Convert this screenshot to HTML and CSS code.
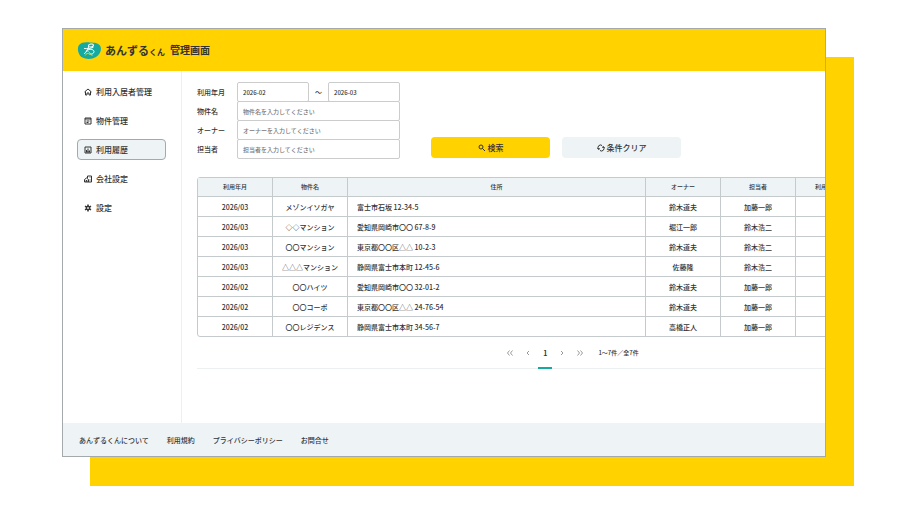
FILE: index.html
```html
<!DOCTYPE html>
<html lang="ja">
<head>
    <meta charset="UTF-8">
    <meta name="viewport" content="width=device-width, initial-scale=1.0">
    <title>あんずるくん 管理画面</title>
    <link rel="stylesheet" href="styles.css">
</head>
<body>
    <div class="window">
        <header class="header">
            <svg class="logo" viewBox="0 0 48 38" aria-hidden="true">
                <path fill="#16a9a0" d="M3 8C8 2 17 2 25 3c9 0 18 1 21 8 3 8-2 16-9 21-8 5-20 5-27 1C2 29-2 15 3 8z"/>
                <ellipse cx="27" cy="9" rx="5" ry="3" fill="none" stroke="#fff" stroke-width="2" transform="rotate(-12 27 9)"/>
                <path fill="none" stroke="#fff" stroke-width="2" stroke-linecap="round" d="M14 15c5 1 11 0 17-2M22 11c0 6-3 11-8 14M17 20c4-4 15-5 16 1 0 4-4 6-8 5"/>
                <path fill="none" stroke="#ffd200" stroke-width="2" stroke-linecap="round" d="M20 20c3 1 6 5 9 9M16 28c2-4 7-4 9-1"/>
            </svg>
            <h1 class="title"><span class="brand">あんずる<small>くん</small></span><span>管理画面</span></h1>
        </header>

        <div class="body">
            <nav class="sidebar">
                <a class="nav-item" href="#">
                    <svg class="icon" viewBox="0 0 16 16"><path d="M1 8l7-6 7 6M3 7v7h3v-4h4v4h3V7"/></svg>
                    利用入居者管理
                </a>
                <a class="nav-item" href="#">
                    <svg class="icon" viewBox="0 0 16 16"><path d="M2 2h12v12H2zM2 4h12M5 8h6M5 11h4"/></svg>
                    物件管理
                </a>
                <a class="nav-item active" href="#" aria-current="page">
                    <svg class="icon" viewBox="0 0 16 16"><path d="M2 2h12v12H2zM5 12V8M8 12V5M11 12V9M4 12h8"/></svg>
                    利用履歴
                </a>
                <a class="nav-item" href="#">
                    <svg class="icon" viewBox="0 0 16 16"><path d="M7 6V2h8v12H1V9l4-3 4 3v5M4 14v-3h2v3M12 5v1M12 8v1M12 11v1"/></svg>
                    会社設定
                </a>
                <a class="nav-item" href="#">
                    <svg class="icon gear" viewBox="0 0 16 16"><path d="M8 1v14M2 4l12 8M14 4L2 12"/><circle cx="8" cy="8" r="4"/><circle class="hole" cx="8" cy="8" r="1"/></svg>
                    設定
                </a>
            </nav>

            <main class="main">
                <form class="search">
                    <div class="fields">
                        <label for="from">利用年月</label>
                        <div class="range">
                            <input id="from" type="text" value="2026-02">
                            <span>〜</span>
                            <input id="to" type="text" value="2026-03" aria-label="利用年月（終了）">
                        </div>
                        <label for="property">物件名</label>
                        <input id="property" type="text" placeholder="物件名を入力してください">
                        <label for="owner">オーナー</label>
                        <input id="owner" type="text" placeholder="オーナーを入力してください">
                        <label for="staff">担当者</label>
                        <input id="staff" type="text" placeholder="担当者を入力してください">
                    </div>
                    <button class="btn btn-primary" type="button">
                        <svg class="icon" viewBox="0 0 16 16"><circle cx="6" cy="6" r="4"/><path d="M9 9l5 5"/></svg>
                        検索
                    </button>
                    <button class="btn" type="reset">
                        <svg class="icon" viewBox="0 0 16 16"><path d="M3 10a5 5 0 0 1 7-7M13 6a5 5 0 0 1-7 7M1 8l2 3 3-2M10 7l3-2 2 3"/></svg>
                        条件クリア
                    </button>
                </form>

                <table class="history">
                    <colgroup>
                        <col class="col"><col class="col"><col><col class="col"><col class="col"><col class="col">
                    </colgroup>
                    <thead>
                        <tr><th>利用年月</th><th>物件名</th><th>住所</th><th>オーナー</th><th>担当者</th><th>利用開始日時</th></tr>
                    </thead>
                    <tbody>
                        <tr><td>2026/03</td><td>メゾンイソガヤ</td><td class="address">富士市石坂 12-34-5</td><td>鈴木道夫</td><td>加藤一郎</td><td></td></tr>
                        <tr><td>2026/03</td><td>◇◇マンション</td><td class="address">愛知県岡崎市〇〇 67-8-9</td><td>堀江一郎</td><td>鈴木浩二</td><td></td></tr>
                        <tr><td>2026/03</td><td>〇〇マンション</td><td class="address">東京都〇〇区△△ 10-2-3</td><td>鈴木道夫</td><td>鈴木浩二</td><td></td></tr>
                        <tr><td>2026/03</td><td>△△△マンション</td><td class="address">静岡県富士市本町 12-45-6</td><td>佐藤隆</td><td>鈴木浩二</td><td></td></tr>
                        <tr><td>2026/02</td><td>〇〇ハイツ</td><td class="address">愛知県岡崎市〇〇 32-01-2</td><td>鈴木道夫</td><td>加藤一郎</td><td></td></tr>
                        <tr><td>2026/02</td><td>〇〇コーポ</td><td class="address">東京都〇〇区△△ 24-76-54</td><td>鈴木道夫</td><td>加藤一郎</td><td></td></tr>
                        <tr><td>2026/02</td><td>〇〇レジデンス</td><td class="address">静岡県富士市本町 34-56-7</td><td>高橋正人</td><td>加藤一郎</td><td></td></tr>
                    </tbody>
                </table>

                <div class="pagination">
                    <a href="#" aria-label="最初"><svg class="icon" viewBox="0 0 16 16"><path d="M7 3L3 8l4 5M13 3L9 8l4 5"/></svg></a>
                    <a href="#" aria-label="前へ"><svg class="icon" viewBox="0 0 16 16"><path d="M10 4L6 8l4 4"/></svg></a>
                    <a class="current" href="#">1</a>
                    <a href="#" aria-label="次へ"><svg class="icon" viewBox="0 0 16 16"><path d="M6 4l4 4-4 4"/></svg></a>
                    <a href="#" aria-label="最後"><svg class="icon" viewBox="0 0 16 16"><path d="M3 3l4 5-4 5M9 3l4 5-4 5"/></svg></a>
                    <span>1〜7件／全7件</span>
                </div>
            </main>
        </div>

        <footer class="footer">
            <a href="#">あんずるくんについて</a>
            <a href="#">利用規約</a>
            <a href="#">プライバシーポリシー</a>
            <a href="#">お問合せ</a>
        </footer>
    </div>
</body>
</html>
```
FILE: styles.css
```css
* {
    box-sizing: border-box;
}

body {
    margin: 0;
    min-height: 100vh;
    padding: 28px 90px 58px 62px;
    display: flex;
    background: #fff;
    color: #333;
    font-family: "Noto Sans CJK JP", sans-serif;
    font-size: 7px;
    font-weight: 500;
    line-height: 10px;
}

a {
    color: inherit;
    text-decoration: none;
}

.window {
    flex: 1;
    min-width: 0;
    display: flex;
    flex-direction: column;
    border: 1px solid #a4a9ab;
    background: #fff;
    box-shadow: 28px 29px 0 #ffd200;
}

/* Header */
.header {
    display: flex;
    align-items: center;
    gap: 3px;
    padding: 12px 14px 11px;
    background: #ffd200;
}

.logo {
    width: 25px;
    height: 19px;
}

.title {
    display: flex;
    gap: 5px;
    margin: 0;
    font-size: 10px;
    line-height: 16px;
    font-weight: 700;
}

.brand {
    font-size: 11px;
}

.brand small {
    font-size: 8px;
}

.icon {
    width: 8px;
    height: 8px;
    flex: none;
    fill: none;
    stroke: #333;
    stroke-width: 2;
}

.gear circle {
    fill: #333;
}

.gear path {
    stroke-width: 3;
}

.gear .hole {
    fill: #fff;
    stroke: #fff;
}

/* Sidebar */
.body {
    flex: 1;
    display: flex;
    min-height: 0;
}

.sidebar {
    width: 119px;
    flex: none;
    display: flex;
    flex-direction: column;
    gap: 8px;
    padding: 10px 15px 10px 14px;
    border-right: 1px solid #edf0f1;
}

.nav-item {
    display: flex;
    align-items: center;
    gap: 4px;
    padding: 4px 6px;
    border: 1px solid transparent;
    border-radius: 4px;
    font-size: 8px;
    line-height: 11px;
}

.nav-item.active {
    background: #eef3f6;
    border-color: #a4a9ab;
}

/* Search form */
.main {
    flex: 1;
    min-width: 0;
    overflow: hidden;
    padding: 11px 0 0 15px;
}

.search {
    display: flex;
    align-items: flex-end;
    gap: 12px;
}

.fields {
    display: grid;
    grid-template-columns: 40px 163px;
    align-items: center;
    margin-right: 19px;
}

.range {
    display: grid;
    grid-template-columns: 1fr 19px 1fr;
    align-items: center;
    text-align: center;
}

.fields input {
    width: 100%;
    height: 20px;
    margin: 0 0 -1px;
    padding: 0 5px;
    border: 1px solid #ccc;
    border-radius: 2px;
    background: #fff;
    color: #333;
    font: inherit;
    font-size: 6px;
}

.fields input::placeholder {
    color: #777;
}

.btn {
    width: 119px;
    height: 21px;
    display: flex;
    align-items: center;
    justify-content: center;
    gap: 2px;
    border: 0;
    border-radius: 4px;
    background: #eef3f6;
    color: #333;
    font: inherit;
    font-size: 8px;
}

.btn-primary {
    background: #ffd200;
}

/* History table */
.history {
    width: calc(100% + 47px);
    margin-top: 19px;
    table-layout: fixed;
    border-collapse: separate;
    border-spacing: 0;
    border: 1px solid #c5cbcd;
    border-radius: 3px;
    text-align: center;
}

.col {
    width: 75px;
}

.history th,
.history td {
    height: 20px;
    padding: 0;
    border-right: 1px solid #c5cbcd;
    border-bottom: 1px solid #c5cbcd;
    white-space: nowrap;
}

.history th {
    height: 19px;
    background: #eef3f6;
    font-size: 6px;
    font-weight: 500;
}

.history tbody tr:last-child td {
    height: 19px;
    border-bottom: 0;
}

.history .address {
    padding-left: 9px;
    text-align: left;
}

/* Pagination */
.pagination {
    display: flex;
    justify-content: center;
    align-items: flex-start;
    gap: 10px;
    padding: 2px 0 0 123px;
    border-bottom: 1px solid #edf0f1;
    font-size: 6px;
    line-height: 28px;
}

.pagination a {
    display: flex;
    align-items: center;
    min-height: 28px;
}

.pagination .icon {
    stroke-width: 1;
}

.pagination .current {
    margin: 0 -4px -1px;
    padding: 0 5px;
    border-bottom: 2px solid #16a9a0;
    font-size: 7px;
    font-weight: 700;
}

.pagination span {
    padding-left: 4px;
}

/* Footer */
.footer {
    display: flex;
    gap: 18px;
    padding: 12px 16px 11px;
    background: #eef3f6;
}
```
